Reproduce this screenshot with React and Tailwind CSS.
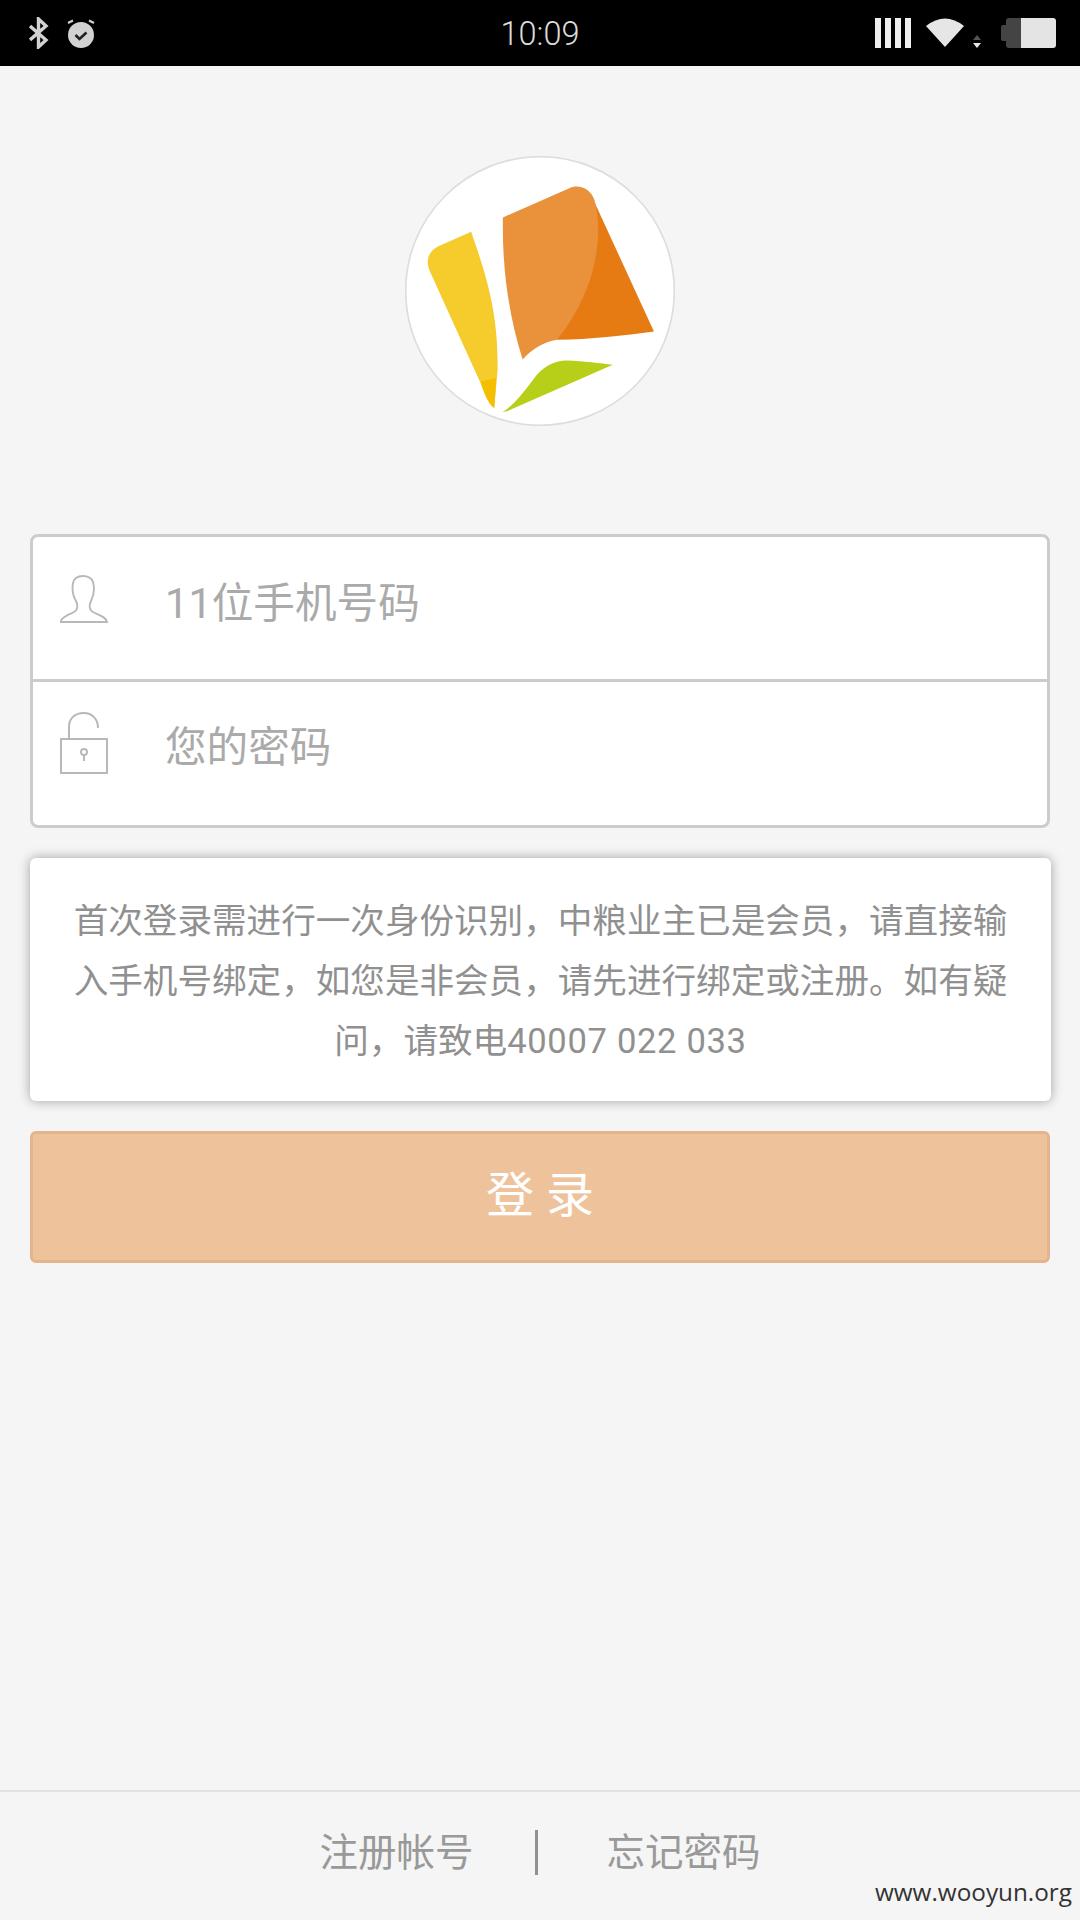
const cjk = "font-['Roboto','Noto_Sans_CJK_SC',sans-serif]";

function StatusBar() {
  return (
    <div className="flex h-[66px] items-center bg-black px-[24px]">
      <div className="flex flex-1 items-center gap-[17px]">
        <svg className="ml-[5px]" width="20" height="32" viewBox="0 0 20 32" fill="none" stroke="#d2d2d2" strokeWidth="3.4">
          <path d="M1 9 L17 23 L9.5 30 V2 L17 9 L1 23" />
        </svg>
        <svg width="30" height="32" viewBox="0 0 30 32">
          <circle cx="15" cy="18" r="13" fill="#d2d2d2" />
          <path d="M9.5 18 L13.5 22 L20.5 15.5" fill="none" stroke="#222" strokeWidth="2.6" />
          <path d="M2 6 L7 3.5 M28 6 L23 3.5" stroke="#d2d2d2" strokeWidth="2.2" />
        </svg>
      </div>
      <div className="pt-[2px] font-['Roboto',sans-serif] text-[32.5px] font-light text-[#dcdcdc]">10:09</div>
      <div className="flex flex-1 items-center justify-end">
        <div className="flex h-[30px] gap-[4px]">
          <div className="w-[6px] bg-[#eeeeee]"></div>
          <div className="w-[6px] bg-[#eeeeee]"></div>
          <div className="w-[6px] bg-[#eeeeee]"></div>
          <div className="w-[6px] bg-[#eeeeee]"></div>
        </div>
        <svg className="ml-[14px]" width="40" height="30" viewBox="0 0 40 30">
          <path d="M1 8 Q20 -7 39 8 L20 29 Z" fill="#e6e6e6" />
        </svg>
        <svg className="ml-[7px] mt-[18px]" width="10" height="14" viewBox="0 0 10 14">
          <path d="M5 0 L9 5 H1 Z" fill="#555555" />
          <path d="M1 8 H9 L5 13 Z" fill="#e6e6e6" />
        </svg>
        <div className="ml-[19px] flex h-[30px] w-[55px] items-center">
          <div className="h-[16px] w-[5px] rounded-l-[2px] bg-[#444444]"></div>
          <div className="h-[30px] w-[15px] rounded-l-[3px] bg-[#444444]"></div>
          <div className="h-[30px] w-[35px] rounded-r-[3px] bg-[#e4e4e4]"></div>
        </div>
      </div>
    </div>
  );
}

function Logo() {
  return (
    <svg width="270" height="270" viewBox="45 48 808 808" className="block">
      <circle cx="449" cy="452" r="402" fill="#ffffff" stroke="#dddddd" strokeWidth="5" />
      <path d="M243 275 C290 410 325 520 322 690 L312 802 C300 795 285 770 270 725 L118 390 C105 355 120 330 145 318 Z" fill="#f6cb2c" />
      <path d="M272 722 L318 712 L312 802 C300 795 285 770 272 722 Z" fill="#f3bf00" />
      <path d="M600 160 L790 573 C700 585 600 597 500 598 Z" fill="#e57b12" />
      <path d="M338 232 L535 145 C565 130 600 145 612 180 C640 280 620 450 500 598 C460 605 425 625 397 657 C360 540 335 400 338 232 Z" fill="#ea913b" />
      <path d="M336 814 C365 800 400 755 430 715 C455 680 490 660 530 660 C580 662 630 668 667 673 L350 812 Z" fill="#b8cf1a" />
    </svg>
  );
}

function UserIcon() {
  return (
    <svg width="48" height="48" viewBox="0 0 48 48" fill="none" stroke="#b8b8b8" strokeWidth="1.9">
      <path d="M0.5 47 H47 C46 41 38 40 33 37 C29 35 29 30 31 26 C34 20 35 14 33 7 C31 2 27 1 23 1 C18 1 14 3 13 8 C12 14 13 21 16 26 C18 30 18 35 14 37 C9 40 2 41 0.5 47 Z" />
    </svg>
  );
}

function LockIcon() {
  return (
    <svg width="48" height="62" viewBox="0 0 48 62" fill="none" stroke="#b8b8b8" strokeWidth="2">
      <rect x="1" y="27" width="46" height="34" />
      <path d="M9 27 V15 C9 6 15 1 24 1 C32 1 38 7 38 16" />
      <circle cx="24" cy="40" r="3" />
      <path d="M24 43 V49" />
    </svg>
  );
}

export default function App() {
  return (
    <div className={`flex h-[1920px] w-[1080px] flex-col bg-[#f5f5f5] ${cjk} relative`}>
      <StatusBar />

      <div className="mt-[90px] flex justify-center">
        <Logo />
      </div>

      <div className="mx-[30px] mt-[108px] h-[294px] rounded-[8px] border-[3px] border-[#cccccc] bg-white">
        <div className="flex h-[145px] items-start border-b-[3px] border-[#cccccc] pl-[27px]">
          <div className="mt-[38px] shrink-0">
            <UserIcon />
          </div>
          <input
            className="ml-[57px] mt-[37px] h-[60px] w-[800px] bg-transparent text-[41.6px] outline-none placeholder:text-[#aaaaaa]"
            placeholder="11位手机号码"
          />
        </div>
        <div className="flex items-start pl-[27px]">
          <div className="mt-[30px] shrink-0">
            <LockIcon />
          </div>
          <input
            className="ml-[57px] mt-[36px] h-[60px] w-[800px] bg-transparent text-[41.6px] outline-none placeholder:text-[#aaaaaa]"
            placeholder="您的密码"
          />
        </div>
      </div>

      <div className="ml-[30px] mt-[30px] h-[243px] w-[1021px] rounded-[6px] bg-white px-[36px] pt-[33px] text-center text-[34.6px] leading-[60px] text-[#909090] shadow-[0_0_12px_rgba(0,0,0,0.35)]">
        首次登录需进行一次身份识别，中粮业主已是会员，请直接输入手机号绑定，如您是非会员，请先进行绑定或注册。如有疑问，请致电<span className="tracking-[0.66px]">40007 022 033</span>
      </div>

      <button className="mx-[30px] mt-[30px] h-[132px] rounded-[6px] border-[3px] border-[#e4b58c] bg-[#eec39c] pb-[2px] text-[48px] text-white">
        登 录
      </button>

      <div className="mt-auto flex h-[130px] items-start justify-center border-t-[2px] border-[#e2e2e2] pt-[38px] text-[38.5px] leading-[44px] text-[#999999]">
        <span className="pt-[1px]">注册帐号</span>
        <span className="ml-[61px] mr-[69px] h-[45px] w-[3px] bg-[#909090]"></span>
        <span className="pt-[1px]">忘记密码</span>
      </div>

      <div className="absolute bottom-[10px] right-[8px] font-['Open_Sans',sans-serif] text-[24.3px] text-[#333333]">
        www.wooyun.org
      </div>
    </div>
  );
}
